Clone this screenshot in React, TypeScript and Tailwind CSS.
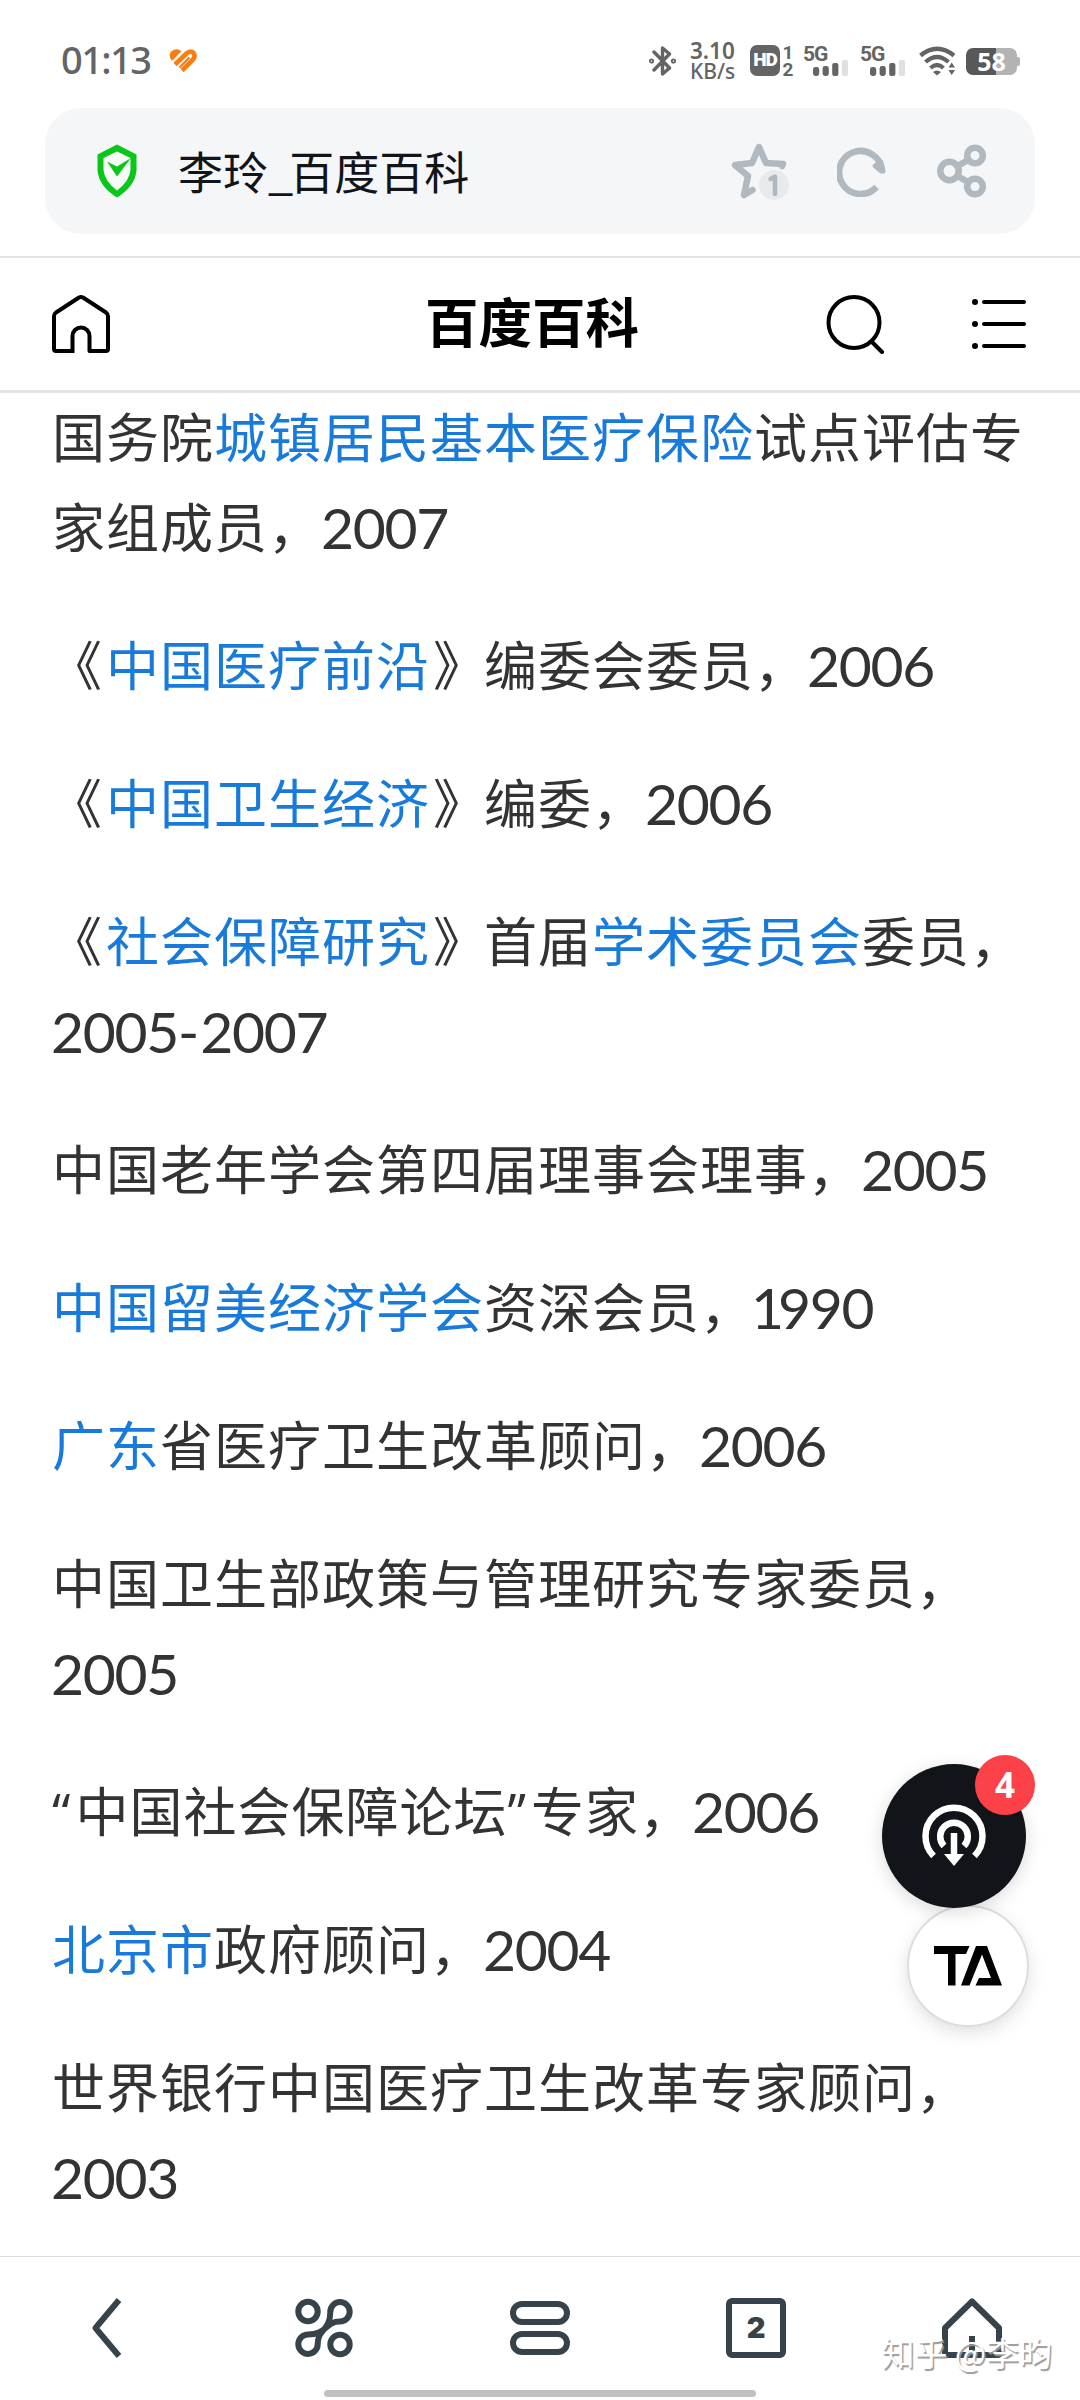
import React from "react";

const CJK = "font-['Noto_Sans_CJK_SC',sans-serif]";

function Num({ children }: { children: React.ReactNode }) {
  return <span className="relative top-px -ml-px font-['Lato',sans-serif] text-[57px] leading-none tracking-[-1.3px]">{children}</span>;
}

function Quote({ children }: { children: React.ReactNode }) {
  return <span className="inline-block w-[23.5px] font-['Open_Sans',sans-serif] leading-none">{children}</span>;
}

function Title({ children }: { children: React.ReactNode }) {
  return (
    <>
      <span className="relative -left-[3px]">《</span>
      <A>{children}</A>
      <span className="relative left-[3px]">》</span>
    </>
  );
}

function A({ children }: { children: React.ReactNode }) {
  return <a className="text-[#187bdc]">{children}</a>;
}

function Signal() {
  return (
    <div className="relative h-[30px] w-[45px]">
      <span className="absolute top-[-1px] left-[-1px] font-['Roboto',sans-serif] text-[21px] leading-[18px] font-bold tracking-[-1px]">5G</span>
      <svg className="absolute top-[14px] left-[9px]" width="36" height="16" viewBox="0 0 36 16">
        <rect x="0" y="7" width="6.200" height="9" rx="2.400" fill="#646464" />
        <rect x="9.600" y="6" width="6.200" height="10" rx="2.400" fill="#646464" />
        <rect x="19.200" y="3" width="6.200" height="13" rx="2" fill="#646464" />
        <rect x="28.800" y="0" width="6.200" height="16" rx="2" fill="#e0e0e0" />
      </svg>
    </div>
  );
}

function StatusBar() {
  return (
    <div className="flex h-[108px] items-start pt-[43px] pr-[60px] pl-[61px] text-[#646464]">
      <span className="mt-[-4px] w-[108px] font-['Noto_Sans',sans-serif] text-[38px] leading-[40px] font-medium tracking-[-1.6px]">01:13</span>
      <svg className="mt-[5px]" width="29" height="25" viewBox="0 0 29 25" fill="none" stroke="#fb7d0d">
        <path d="M3 13 Q-1.500 7 2.500 3.200 Q7-.8 12.500 3Z" fill="#fb7d0d" stroke="none" />
        <path d="M6 16.500 L17.500 5.500 Q21.500 2 24.600 5 Q27 8.500 23.500 12 L13 22.500" strokeWidth="4.600" />
        <path d="M10.500 19.500 L20.500 9.500" strokeWidth="2.200" />
      </svg>
      <svg className="mt-[3px] ml-auto" width="27" height="30" viewBox="0 0 27 30" fill="none" stroke="#646464" strokeWidth="3.400" strokeLinejoin="round" strokeLinecap="round">
        <path d="M5 6 L20.500 22 L13.500 28 V2 L20.500 8 L5 24" />
        <circle cx="2.500" cy="15" r=".9" />
        <circle cx="24.500" cy="15" r=".9" />
      </svg>
      <div className="mt-[-2px] ml-[14px] w-[47px] font-['Noto_Sans',sans-serif] text-[22.500px] leading-[20px] font-semibold whitespace-nowrap">
        3.10<br /><span className="text-[21px] font-medium">KB/s</span>
      </div>
      <div className="mt-[2px] ml-[13px] flex h-[31px] w-[30px] items-center justify-center rounded-[7px] bg-[#646464] font-['Roboto',sans-serif] text-[19px] font-black tracking-[-1px] text-white">HD</div>
      <div className="mt-[1px] ml-[2px] w-[12px] text-center font-['Roboto',sans-serif] text-[19px] leading-[17px] font-bold">1<br />2</div>
      <div className="mt-[3px] ml-[10px]"><Signal /></div>
      <div className="mt-[3px] ml-[12px]"><Signal /></div>
      <svg className="mt-[3px] ml-[13px]" width="38" height="30" viewBox="0 0 38 30" fill="none" stroke="#646464" strokeWidth="4.200">
        <path d="M1.500 9.500 Q18 -4 35 9.500" />
        <path d="M6.500 16 Q18 6 29.500 16" />
        <path d="M11.500 22 Q18 16 24.500 22" />
        <path d="M14 26 Q18 23 22 26 L18 29.500Z" fill="#646464" stroke="none" />
        <path d="M29.500 21.500 L32.700 16.500 L36 21.500Z M29.500 24 L32.700 29 L36 24Z" fill="#646464" stroke="none" />
      </svg>
      <div className="mt-[5px] ml-[9px] flex items-center">
        <div className="flex h-[27px] w-[51px] items-center justify-center rounded-[7px] bg-[linear-gradient(90deg,#585858_30px,#b3b3b3_30px)] font-['Noto_Sans',sans-serif] text-[25px] leading-none font-bold text-white">58</div>
        <div className="h-[9px] w-[3px] rounded-r-[2px] bg-[#b3b3b3]" />
      </div>
    </div>
  );
}

function AddressBar() {
  return (
    <div className="mx-[45px] flex h-[126px] items-center rounded-[36px] bg-[#f4f6f8] pr-[48px] pl-[52px]">
      <svg width="40" height="54" viewBox="0 0 40 54">
        <path d="M20 .5 L39.500 10.500 V26 Q38.500 42 20 53.500 Q1.500 42 .5 26 V10.500Z" fill="#09c718" />
        <path d="M20 7.500 L33.500 14 V26 Q32.500 37 20 46.500 Q7.500 37 6.500 26 V14Z" fill="#f6fbf8" />
        <path d="M10 17.500 L20 22.500 L34 14 L20 32.500Z" fill="#09c718" />
      </svg>
      <span className={`${CJK} -mt-px ml-[41px] text-[45px] leading-[60px] text-[#111418]`}>李玲<span className="tracking-[-4px]">_</span>百度百科</span>
      <svg className="ml-auto" width="58" height="58" viewBox="0 0 58 58" fill="none" stroke="#b1b9c0" strokeWidth="6.500" strokeLinecap="round" strokeLinejoin="round">
        <path d="M21.500 48 L13 53 L17 34 L4 23 L21 21 L28 5 L35 21 L52 22 L51 24" />
        <circle cx="43" cy="43" r="15" fill="#e8ebed" stroke="none" />
        <path d="M39.500 37 L44 34.500 V52" strokeWidth="4.500" />
      </svg>
      <svg className="ml-[48px]" width="50" height="52" viewBox="0 0 50 52" fill="none" stroke="#b1b9c0" strokeWidth="6.500">
        <path d="M39.500 42 A21.500 21.500 0 1 1 45 25" />
        <path d="M37.500 21 L44 16.500 L46.500 26.500 L44 26.500Z" fill="#b1b9c0" strokeWidth="4" strokeLinejoin="round" />
      </svg>
      <svg className="ml-[50px]" width="50" height="54" viewBox="0 0 50 54" fill="none" stroke="#b1b9c0" strokeWidth="6.500">
        <circle cx="12.500" cy="27" r="9.200" />
        <circle cx="38" cy="11.500" r="7.800" />
        <circle cx="38" cy="42.500" r="7.800" />
        <path d="M20.500 22 L31 16 M20.500 32 L31 38" />
      </svg>
    </div>
  );
}

function SiteHeader() {
  return (
    <header className="mt-[22px] flex h-[137px] items-center border-t-2 border-b-[3px] border-t-[#dfe4e5] border-b-[#e3e4e5] pr-[53px] pl-[51px]">
      <svg width="60" height="60" viewBox="0 0 60 60" fill="none" stroke="#000" strokeWidth="4" strokeLinejoin="round">
        <path d="M21.500 57 V42 A8.500 8.500 0 0 1 38.500 42 V57 H55 Q57 57 57 55 V22 Q57 20 55 18.500 L32 3.500 Q30 2.500 28 3.500 L5 18.500 Q3 20 3 22 V55 Q3 57 5 57 H23.500" />
      </svg>
      <h1 className={`${CJK} -mt-[9px] ml-[314px] text-[53.500px] leading-[80px] font-bold text-black`}>百度百科</h1>
      <svg className="ml-auto" width="60" height="60" viewBox="0 0 60 60" fill="none" stroke="#000" strokeWidth="4" strokeLinecap="round">
        <circle cx="29" cy="28.500" r="25.500" />
        <path d="M47 48 L57 58" />
      </svg>
      <svg className="ml-[86px]" width="56" height="52" viewBox="0 0 56 52" stroke="#000" strokeWidth="4" strokeLinecap="round">
        <path d="M13 4 H53 M13 26 H53 M13 48 H53" />
        <path d="M4 4 H4.010 M4 26 H4.010 M4 48 H4.010" strokeWidth="6" />
      </svg>
    </header>
  );
}

function Article() {
  return (
    <main className={`${CJK} -mt-[3px] flex flex-col gap-12 pr-[50px] pl-[52px] text-[53px] leading-[90px] tracking-[1px] text-[#333] [&>p]:h-[90px] [&>p]:whitespace-nowrap`}>
      <p className="!h-[180px]">国务院<A>城镇居民基本医疗保险</A>试点评估专<br />家组成员，<Num>2007</Num></p>
      <p><Title>中国医疗前沿</Title>编委会委员，<Num>2006</Num></p>
      <p><Title>中国卫生经济</Title>编委，<Num>2006</Num></p>
      <p className="!h-[180px]"><Title>社会保障研究</Title>首届<A>学术委员会</A>委员，<br /><Num>2005<span className="tracking-[1px]">-</span>2007</Num></p>
      <p>中国老年学会第四届理事会理事，<Num>2005</Num></p>
      <p><A>中国留美经济学会</A>资深会员，<Num><span className="-ml-[2px] tracking-[-6px]">1</span>990</Num></p>
      <p><A>广东</A>省医疗卫生改革顾问，<Num>2006</Num></p>
      <p className="!h-[180px]">中国卫生部政策与管理研究专家委员，<br /><Num>2005</Num></p>
      <p><Quote>“</Quote>中国社会保障论坛<Quote>”</Quote>专家，<Num>2006</Num></p>
      <p><A>北京市</A>政府顾问，<Num>2004</Num></p>
      <p className="!h-[180px]">世界银行中国医疗卫生改革专家顾问，<br /><Num>2003</Num></p>
    </main>
  );
}

function FloatingButtons() {
  return (
    <div className="absolute top-[1764px] right-[54px] flex flex-col items-end">
      <button className="relative z-10 flex h-36 w-36 items-center justify-center rounded-full bg-[#111418] shadow-[0_4px_18px_rgba(0,0,0,0.15)]">
        <svg width="66" height="66" viewBox="0 0 66 66" fill="none" stroke="#fff" strokeWidth="6.500">
          <path d="M12.500 53 A28.500 28.500 0 1 1 53.500 53" />
          <path d="M23 43 A13.800 13.800 0 1 1 43 43" />
          <path d="M33 30 V53" />
          <path d="M23 51 H43 L33 63Z" fill="#fff" stroke="none" />
        </svg>
        <span className="absolute -top-[9px] -right-[9px] flex h-[60px] w-[60px] items-center justify-center rounded-full bg-[#fd4148] font-['Noto_Sans',sans-serif] text-[35px] font-bold text-white">4</span>
      </button>
      <button className="-mt-[3px] mr-[-3px] flex h-[122px] w-[122px] items-center justify-center rounded-full border-2 border-[#dedede] bg-white shadow-[0_6px_18px_rgba(0,0,0,0.12)]">
        <svg width="68" height="40" viewBox="0 0 68 40" fill="#000">
          <path d="M0 0 H35.500 L32 8 H21.500 V39.500 H14 V8 H0Z" />
          <path d="M42 0 H53 L68 39.500 H41.500 L45 32 H57 L48 8.500 L35.500 39.500 H27Z" />
        </svg>
      </button>
    </div>
  );
}

function BottomNav() {
  const ink = "#36434a";
  return (
    <nav className="absolute top-[2256px] left-0 h-36 w-full border-t border-[#dcdfe0] bg-white">
      <div className="grid h-[142px] grid-cols-5 items-center justify-items-center">
        <svg width="60" height="62" viewBox="0 0 60 62" fill="none" stroke={ink} strokeWidth="6">
          <path d="M41 3 L17.500 31 L41 59" strokeLinejoin="round" />
        </svg>
        <svg width="60" height="62" viewBox="0 0 60 62" fill="none" stroke={ink} strokeWidth="6">
          <circle cx="14" cy="14.500" r="9.700" />
          <circle cx="46" cy="47.500" r="9.700" />
          <path d="M36.300 15 A9.700 9.700 0 1 1 46 24.500 C31 24.500 33 37.500 14 37.500 A9.700 9.700 0 1 0 23.700 47 C23.700 32 36.300 34 36.300 15Z" />
        </svg>
        <svg width="62" height="56" viewBox="0 0 62 56" fill="none" stroke={ink} strokeWidth="6">
          <rect x="4" y="4" width="54" height="18" rx="9" />
          <rect x="4" y="34" width="54" height="18" rx="9" />
        </svg>
        <div className="flex h-[60px] w-[60px] items-center justify-center rounded-[6px] border-[6px] border-[#36434a] font-['Inter',sans-serif] text-[29px] font-black text-[#36434a]">2</div>
        <svg width="60" height="62" viewBox="0 0 60 62" fill="none" stroke={ink} strokeWidth="6" strokeLinejoin="round">
          <path d="M30 4.500 L57 31 V57 Q57 58 56 58 H4 Q3 58 3 57 V31Z M30 39 V58" />
        </svg>
      </div>
      <div className="absolute bottom-[3px] left-1/2 h-[7px] w-[432px] -translate-x-1/2 rounded-full bg-[#c1c1c1]" />
      <span className={`${CJK} absolute right-[28px] bottom-[24px] text-[33px] leading-[48px] whitespace-nowrap text-white [text-shadow:1.5px_1.5px_1px_#999]`}>知乎 @李昀</span>
    </nav>
  );
}

export default function App() {
  return (
    <div className="relative h-[2400px] w-[1080px] overflow-hidden bg-white">
      <StatusBar />
      <AddressBar />
      <SiteHeader />
      <Article />
      <FloatingButtons />
      <BottomNav />
    </div>
  );
}
